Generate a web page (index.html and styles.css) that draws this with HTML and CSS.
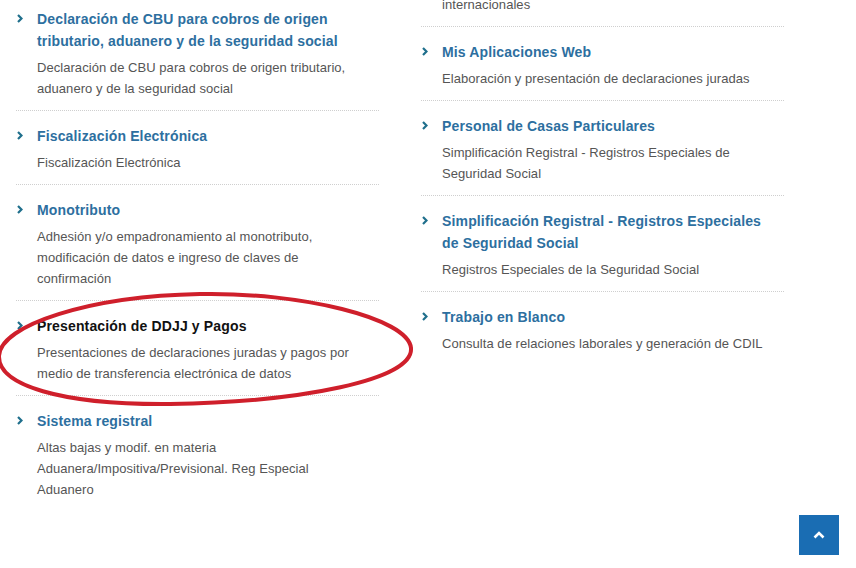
FILE: index.html
```html
<!DOCTYPE html>
<html lang="es">
<head>
<meta charset="utf-8">
<title>Servicios</title>
<link rel="stylesheet" href="styles.css">
</head>
<body>
<div class="page">
  <div class="grid">
    <ul class="col">
      <li class="item">
        <span class="chev"><svg viewBox="0 0 6 9" width="6" height="9"><path d="M1 1 L4.5 4.5 L1 8" fill="none" stroke="currentColor" stroke-width="2.2"/></svg></span>
        <div class="body">
          <a class="title" href="#">Declaración de CBU para cobros de origen tributario, aduanero y de la seguridad social</a>
          <p class="desc">Declaración de CBU para cobros de origen tributario, aduanero y de la seguridad social</p>
        </div>
      </li>
      <li class="item">
        <span class="chev"><svg viewBox="0 0 6 9" width="6" height="9"><path d="M1 1 L4.5 4.5 L1 8" fill="none" stroke="currentColor" stroke-width="2.2"/></svg></span>
        <div class="body">
          <a class="title" href="#">Fiscalización Electrónica</a>
          <p class="desc">Fiscalización Electrónica</p>
        </div>
      </li>
      <li class="item">
        <span class="chev"><svg viewBox="0 0 6 9" width="6" height="9"><path d="M1 1 L4.5 4.5 L1 8" fill="none" stroke="currentColor" stroke-width="2.2"/></svg></span>
        <div class="body">
          <a class="title" href="#">Monotributo</a>
          <p class="desc">Adhesión y/o empadronamiento al monotributo, modificación de datos e ingreso de claves de confirmación</p>
        </div>
      </li>
      <li class="item">
        <span class="chev"><svg viewBox="0 0 6 9" width="6" height="9"><path d="M1 1 L4.5 4.5 L1 8" fill="none" stroke="currentColor" stroke-width="2.2"/></svg></span>
        <div class="body">
          <a class="title title-hover" href="#">Presentación de DDJJ y Pagos</a>
          <p class="desc">Presentaciones de declaraciones juradas y pagos por medio de transferencia electrónica de datos</p>
        </div>
      </li>
      <li class="item last">
        <span class="chev"><svg viewBox="0 0 6 9" width="6" height="9"><path d="M1 1 L4.5 4.5 L1 8" fill="none" stroke="currentColor" stroke-width="2.2"/></svg></span>
        <div class="body">
          <a class="title" href="#">Sistema registral</a>
          <p class="desc">Altas bajas y modif. en materia Aduanera/Impositiva/Previsional. Reg Especial Aduanero</p>
        </div>
      </li>
    </ul>
    <ul class="col">
      <li class="item fragment">
        <span class="chev"></span>
        <div class="body">
          <p class="desc">internacionales</p>
        </div>
      </li>
      <li class="item">
        <span class="chev"><svg viewBox="0 0 6 9" width="6" height="9"><path d="M1 1 L4.5 4.5 L1 8" fill="none" stroke="currentColor" stroke-width="2.2"/></svg></span>
        <div class="body">
          <a class="title" href="#">Mis Aplicaciones Web</a>
          <p class="desc">Elaboración y presentación de declaraciones juradas</p>
        </div>
      </li>
      <li class="item">
        <span class="chev"><svg viewBox="0 0 6 9" width="6" height="9"><path d="M1 1 L4.5 4.5 L1 8" fill="none" stroke="currentColor" stroke-width="2.2"/></svg></span>
        <div class="body">
          <a class="title" href="#">Personal de Casas Particulares</a>
          <p class="desc">Simplificación Registral - Registros Especiales de Seguridad Social</p>
        </div>
      </li>
      <li class="item">
        <span class="chev"><svg viewBox="0 0 6 9" width="6" height="9"><path d="M1 1 L4.5 4.5 L1 8" fill="none" stroke="currentColor" stroke-width="2.2"/></svg></span>
        <div class="body">
          <a class="title" href="#">Simplificación Registral - Registros Especiales de Seguridad Social</a>
          <p class="desc">Registros Especiales de la Seguridad Social</p>
        </div>
      </li>
      <li class="item last">
        <span class="chev"><svg viewBox="0 0 6 9" width="6" height="9"><path d="M1 1 L4.5 4.5 L1 8" fill="none" stroke="currentColor" stroke-width="2.2"/></svg></span>
        <div class="body">
          <a class="title" href="#">Trabajo en Blanco</a>
          <p class="desc">Consulta de relaciones laborales y generación de CDIL</p>
        </div>
      </li>
    </ul>
  </div>
</div>

<svg class="mark" viewBox="0 0 856 568" width="856" height="568" aria-hidden="true">
  <path d="M200 294 C 300 292, 408 318, 411 348 C 414 380, 300 402, 170 404 C 60 405, -2 385, -1 356 C 0 325, 90 296, 200 294 Z" fill="none" stroke="#cf1f2b" stroke-width="4" stroke-linejoin="round"/>
</svg>

<a class="totop" href="#" aria-label="Volver arriba">
  <svg viewBox="0 0 12 8" width="12" height="8"><path d="M1.5 6.5 L6 2 L10.5 6.5" fill="none" stroke="#fff" stroke-width="2.6"/></svg>
</a>
</body>
</html>
```
FILE: styles.css
```css
* { box-sizing: border-box; }
html, body { margin: 0; padding: 0; }
body {
  background: #fff;
  font-family: "Liberation Sans", Arial, sans-serif;
  overflow: hidden;
  width: 856px;
  height: 568px;
  position: relative;
}
.page {
  padding: 0 16px;
}
.grid {
  display: grid;
  grid-template-columns: 363px 363px;
  column-gap: 42px;
  margin-top: -6px;
}
.col {
  list-style: none;
  margin: 0;
  padding: 0;
}
.item {
  display: flex;
  padding: 14px 16px 11px 0;
  border-bottom: 1px dotted #cfcfcf;
}
.item.last { border-bottom: none; }
.item.fragment { padding-top: 0; }
.chev {
  flex: 0 0 21px;
  color: #1f6f8c;
  padding-top: 6px;
  padding-left: 1px;
  line-height: 0;
}
.body { flex: 1; }
.title {
  display: block;
  font-size: 14px;
  font-weight: bold;
  line-height: 22px;
  color: #2d6f9f;
  text-decoration: none;
  letter-spacing: 0.15px;
}
.title-hover { color: #111; }
.desc {
  margin: 5px 0 0;
  font-size: 13px;
  line-height: 21px;
  color: #555;
  letter-spacing: 0.05px;
}
.fragment .desc { margin-top: 0; }
.mark {
  position: absolute;
  left: 0;
  top: 0;
  pointer-events: none;
}
.totop {
  position: absolute;
  left: 799px;
  top: 515px;
  width: 40px;
  height: 40px;
  background: #1a6db3;
  display: flex;
  align-items: center;
  justify-content: center;
}
```
